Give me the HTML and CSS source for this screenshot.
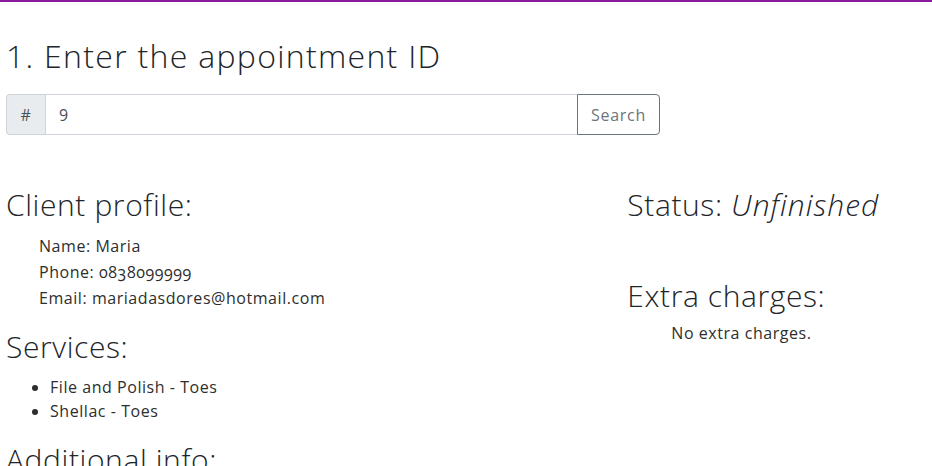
FILE: index.html
```html
<!DOCTYPE html>
<html lang="en">
<head>
<meta charset="utf-8">
<title>Appointment</title>
<link rel="stylesheet" href="styles.css">
</head>
<body>
<div class="page">
  <h2 class="title">1. Enter the appointment ID</h2>
  <div class="input-group">
    <span class="addon">#</span>
    <input class="field" type="text" value="9">
    <button class="btn" type="button">Search</button>
  </div>
  <div class="row">
    <div class="col-main">
      <h3 class="sub first">Client profile:</h3>
      <div class="profile">
        <div class="line">Name: Maria</div>
        <div class="line">Phone: <span class="num">0838099999</span></div>
        <div class="line">Email: mariadasdores@hotmail.com</div>
      </div>
      <h3 class="sub services">Services:</h3>
      <ul class="list">
        <li>File and Polish - Toes</li>
        <li>Shellac - Toes</li>
      </ul>
      <h3 class="sub extra-info">Additional info:</h3>
    </div>
    <div class="col-side">
      <h3 class="sub first">Status: <em>Unfinished</em></h3>
      <h3 class="sub charges">Extra charges:</h3>
      <p class="note">No extra charges.</p>
    </div>
  </div>
</div>
</body>
</html>
```

FILE: styles.css
```css
html, body {
  margin: 0;
  padding: 0;
  background: #fff;
}
body {
  border-top: 2px solid #8a1a9c;
  font-family: "Open Sans", "Noto Sans", sans-serif;
  font-size: 16px;
  letter-spacing: 0.55px;
  color: #2e2e2e;
  height: 464px;
  overflow: hidden;
}
.page {
  padding: 0 6px;
}
.title {
  font-size: 32px;
  line-height: 38.4px;
  font-weight: 300;
  letter-spacing: 1.3px;
  margin: 35px 0 18.6px;
  color: #212529;
}
.input-group {
  display: flex;
  width: 654px;
  height: 41px;
}
.addon {
  box-sizing: border-box;
  width: 39px;
  display: flex;
  align-items: center;
  justify-content: center;
  background: #e9ecef;
  border: 1px solid #ced4da;
  border-right: none;
  border-radius: 4px 0 0 4px;
  color: #495057;
  font-size: 16px;
}
.field {
  flex: 1;
  box-sizing: border-box;
  height: 41px;
  margin: 0;
  border: 1px solid #ced4da;
  border-right: none;
  padding: 0 13px;
  font-family: inherit;
  font-size: 16px;
  letter-spacing: 0.55px;
  color: #495057;
  outline: none;
  border-radius: 0;
}
.btn {
  box-sizing: border-box;
  width: 83px;
  height: 41px;
  margin: 0;
  border: 1px solid #6c757d;
  border-radius: 0 4px 4px 0;
  background: #fff;
  color: #6c757d;
  font-family: inherit;
  font-size: 16px;
  letter-spacing: 0.7px;
  padding: 0;
}
.row {
  display: grid;
  grid-template-columns: 615.3px 1fr;
  column-gap: 6px;
}
.sub {
  font-size: 30px;
  line-height: 36px;
  font-weight: 300;
  letter-spacing: 0.6px;
  margin: 0;
  color: #212529;
}
.sub em {
  font-style: italic;
  letter-spacing: 1px;
}
.first {
  margin-top: 52.4px;
}
.profile {
  margin: 9.4px 0 0 33px;
  line-height: 26px;
}
.num {
  font-variant-numeric: oldstyle-nums;
}
.services {
  margin-top: 18px;
}
.list {
  margin: 10px 0 0;
  padding-left: 44px;
  line-height: 24px;
}
.extra-info {
  margin-top: 19.6px;
}
.charges {
  margin-top: 55px;
}
.note {
  margin: 7px 0 0 44px;
  line-height: 24px;
}
```
